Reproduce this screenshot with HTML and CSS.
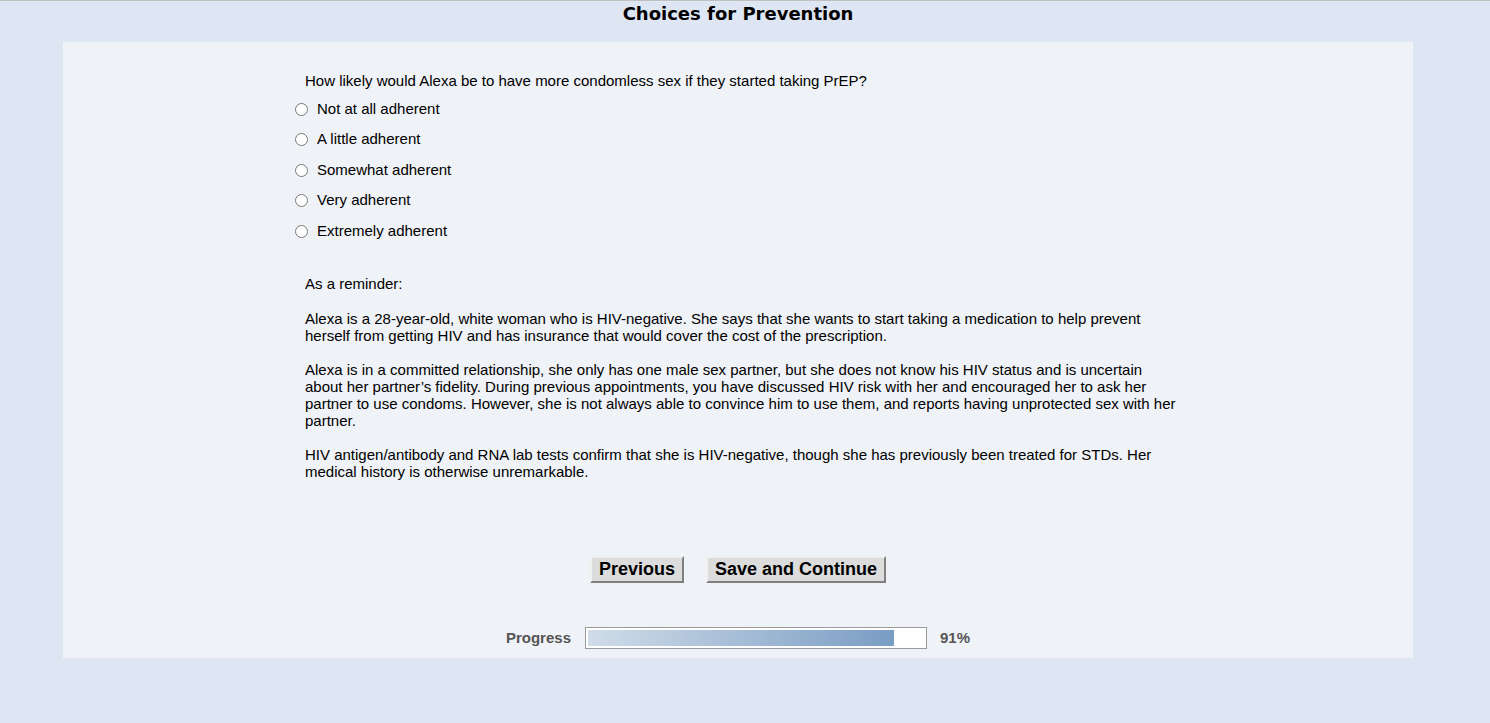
FILE: index.html
```html
<!DOCTYPE html>
<html>
<head>
<meta charset="utf-8">
<link rel="stylesheet" href="styles.css">
</head>
<body>
<div class="topline"></div>
<div class="page">
<h1 class="title">Choices for Prevention</h1>
<div class="panel">
  <div class="column">
    <p class="question">How likely would Alexa be to have more condomless sex if they started taking PrEP?</p>
    <ul class="options">
      <li><label><input type="radio" name="q"><span>Not at all adherent</span></label></li>
      <li><label><input type="radio" name="q"><span>A little adherent</span></label></li>
      <li><label><input type="radio" name="q"><span>Somewhat adherent</span></label></li>
      <li><label><input type="radio" name="q"><span>Very adherent</span></label></li>
      <li><label><input type="radio" name="q"><span>Extremely adherent</span></label></li>
    </ul>
    <div class="reminder">
      <p>As a reminder:</p>
      <p>Alexa is a 28-year-old, white woman who is HIV-negative. She says that she wants to start taking a medication to help prevent herself from getting HIV and has insurance that would cover the cost of the prescription.</p>
      <p>Alexa is in a committed relationship, she only has one male sex partner, but she does not know his HIV status and is uncertain about her partner’s fidelity. During previous appointments, you have discussed HIV risk with her and encouraged her to ask her partner to use condoms. However, she is not always able to convince him to use them, and reports having unprotected sex with her partner.</p>
      <p>HIV antigen/antibody and RNA lab tests confirm that she is HIV-negative, though she has previously been treated for STDs. Her medical history is otherwise unremarkable.</p>
    </div>
  </div>
  <div class="buttons">
    <button class="btn">Previous</button>
    <button class="btn">Save and Continue</button>
  </div>
  <div class="progress">
    <span class="plabel">Progress</span>
    <div class="bar"><div class="fill" style="width: 91%"></div></div>
    <span class="pvalue">91%</span>
  </div>
</div>
</div>
</body>
</html>
```
FILE: styles.css
```css
html, body {
  margin: 0;
  padding: 0;
}
body {
  background: #dfe6f3;
  font-family: "Liberation Sans", Arial, sans-serif;
  font-size: 15px;
  color: #000;
  min-height: 723px;
}
.topline {
  height: 1px;
  background: #c0c0c0;
}
.page {
  margin-left: 63px;
  width: 1350px;
}
.title {
  margin: 0;
  padding-top: 1px;
  height: 40px;
  text-align: center;
  font-family: "DejaVu Sans", Tahoma, sans-serif;
  font-size: 18px;
  font-weight: bold;
  line-height: 24px;
  color: #000;
}
.panel {
  height: 616px;
  background: #eff2f7;
  box-sizing: border-box;
  padding-top: 30px;
}
.column {
  width: 886px;
  margin: 0 auto;
}
.question {
  margin: 0 0 3px 10px;
  line-height: 18px;
}
.options {
  list-style: none;
  margin: 0;
  padding: 0;
}
.options li {
  height: 30.5px;
  display: flex;
  align-items: center;
}
.options label {
  display: flex;
  align-items: center;
}
.options input {
  margin: 0 9px 0 0;
  width: 13px;
  height: 13px;
  position: relative;
  top: 1px;
}
.reminder {
  padding: 29px 0 0 10px;
}
.reminder p {
  margin: 0 0 17px 0;
  line-height: 17px;
}
.reminder p:first-child {
  margin-bottom: 18px;
}
.buttons {
  display: flex;
  justify-content: center;
  gap: 22px;
  margin-top: 76px;
}
.btn {
  font-family: "Liberation Sans", Arial, sans-serif;
  font-size: 18px;
  font-weight: bold;
  color: #000;
  background: #dcdcdc;
  border: 2px solid;
  border-color: #f0f0f0 #808080 #808080 #f0f0f0;
  padding: 0 7px;
  height: 27px;
  line-height: 23px;
}
.progress {
  display: flex;
  justify-content: center;
  align-items: center;
  margin-top: 44px;
  color: #555;
  font-weight: bold;
  font-size: 15px;
}
.plabel {
  margin-right: 14px;
}
.bar {
  width: 336px;
  height: 16px;
  border: 1px solid #9a9a9a;
  background: #fff;
  padding: 2px;
}
.fill {
  height: 100%;
  background: linear-gradient(to right, #d0dce8, #7a9dc4);
}
.pvalue {
  margin-left: 13px;
}
```
